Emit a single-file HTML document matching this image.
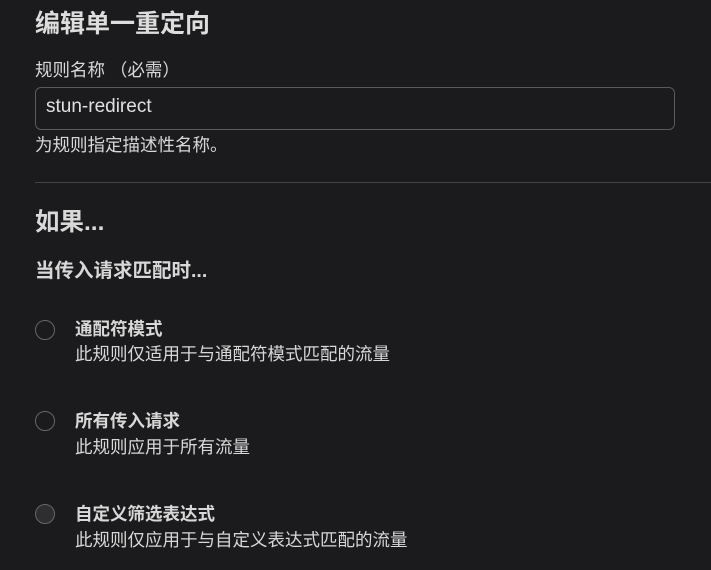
<!DOCTYPE html>
<html><head><meta charset="utf-8"><style>
body{margin:0;width:711px;height:570px;background:#1b1b1d;color:#d8d8d8;font-family:"Liberation Sans","Noto Sans CJK SC",sans-serif;overflow:hidden;position:relative}
.a{position:absolute;white-space:nowrap}
.b{font-weight:bold}
.r{position:absolute;left:35px;width:20px;height:20px;border:1.5px solid #666;border-radius:50%;box-sizing:border-box}
</style></head><body>
<div class="a b" style="left:35px;top:4px;font-size:25px;color:#ddd">编辑单一重定向</div>
<div class="a" style="left:35px;top:57px;font-size:17.5px">规则名称 （必需）</div>
<div class="a" style="left:35px;top:87px;width:640px;height:43px;border:1px solid #5a5a5a;border-radius:6px;box-sizing:border-box"></div>
<div class="a" style="left:46px;top:96px;font-size:19px;color:#e0e0e0">stun-redirect</div>
<div class="a" style="left:35px;top:132px;font-size:17.5px">为规则指定描述性名称。</div>
<div class="a" style="left:35px;top:182px;width:676px;height:1px;background:#444"></div>
<div class="a b" style="left:35px;top:203px;font-size:24.5px">如果...</div>
<div class="a b" style="left:35px;top:254px;font-size:19.5px">当传入请求匹配时...</div>
<div class="r" style="top:320px"></div>
<div class="a b" style="left:75px;top:316px;font-size:17.5px">通配符模式</div>
<div class="a" style="left:75px;top:341px;font-size:17.5px">此规则仅适用于与通配符模式匹配的流量</div>
<div class="r" style="top:411px"></div>
<div class="a b" style="left:75px;top:408px;font-size:17.5px">所有传入请求</div>
<div class="a" style="left:75px;top:434px;font-size:17.5px">此规则应用于所有流量</div>
<div class="r" style="top:504px;background:#2e2e30"></div>
<div class="a b" style="left:75px;top:501px;font-size:17.5px">自定义筛选表达式</div>
<div class="a" style="left:75px;top:527px;font-size:17.5px">此规则仅应用于与自定义表达式匹配的流量</div>
</body></html>
